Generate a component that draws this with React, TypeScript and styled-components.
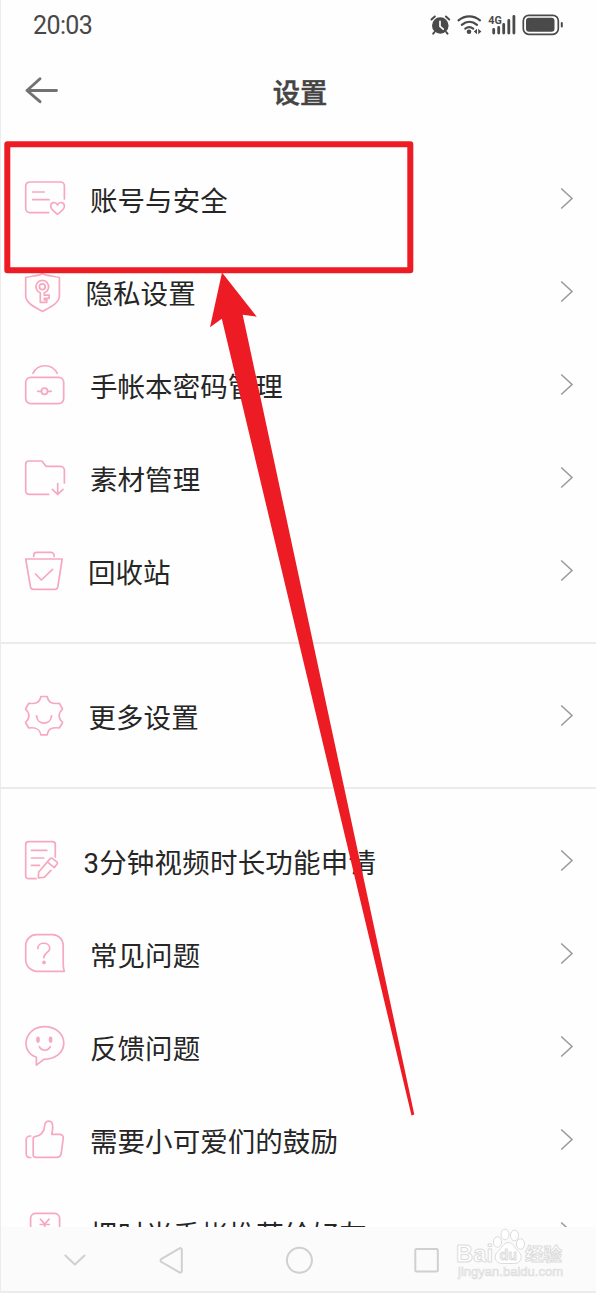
import React from "react";
import styled, { createGlobalStyle } from "styled-components";

const Global = createGlobalStyle`
  * { box-sizing: border-box; }
  body { margin: 0; background: #fefefe; overflow: hidden; }
`;

const Screen = styled.div`
  position: relative;
  display: flex;
  flex-direction: column;
  width: 596px;
  height: 1293px;
  overflow: hidden;
  background: #fefefe;
  border-left: 1px solid #ececec;
  border-bottom: 2px solid #ececec;
  font-family: Roboto, "Noto Sans CJK SC", sans-serif;
  color: #262626;
`;

const StatusBar = styled.div`
  display: flex;
  flex: none;
  justify-content: space-between;
  height: 50px;
  padding: 0 30px 0 32px;
`;

const Clock = styled.div`
  font: 400 25px/52px Roboto, sans-serif;
  letter-spacing: -0.6px;
  color: #484848;
`;

const StatusIcons = styled.svg`
  width: 140px;
  height: 50px;
`;

const SignalText = styled.text`
  font: 700 11.5px Roboto, sans-serif;
  fill: #4a4a4a;
`;

const Header = styled.header`
  display: grid;
  flex: none;
  grid-template-columns: 60px 1fr 60px;
  align-items: center;
  height: 82px;
  margin-bottom: 20px;
  padding: 0 0 0 3px;
`;

const BackIcon = styled.svg`
  width: 60px;
  height: 82px;
`;

const Title = styled.h1`
  margin: 0 0 1px;
  text-align: center;
  font: 500 27.3px/40px "Noto Sans CJK SC", sans-serif;
  color: #444;
  -webkit-text-stroke: 0.5px #444;
`;

const List = styled.main`
  flex: 1;
  min-height: 0;
  overflow: hidden;
`;

const Section = styled.section`
  padding-bottom: 25px;

  & + & {
    border-top: 2px solid #ebebeb;
    padding-top: 25px;
  }
`;

const Row = styled.div`
  display: flex;
  align-items: center;
  height: 93px;
  padding: 0 16px 0 19px;
`;

const RowIcon = styled.svg`
  flex: none;
  width: 50px;
  height: 61px;
  fill: none;
  stroke: #f6a8bf;
  stroke-width: 1.7;
  stroke-linecap: round;
  stroke-linejoin: round;
`;

const Label = styled.span<{ $gap: number; $spacing?: number }>`
  flex: 1;
  margin-left: ${(p) => p.$gap}px;
  padding-top: 6px;
  font-size: 27.5px;
  line-height: 40px;
  letter-spacing: ${(p) => p.$spacing ?? 0.05}px;
  white-space: nowrap;
`;

const Chevron = styled.svg`
  flex: none;
  width: 28px;
  height: 29px;
  fill: none;
  stroke: #9c9c9c;
  stroke-width: 1.6;
`;

const NavBar = styled.nav`
  position: relative;
  flex: none;
  height: 64px;
  background: #fbfbfb;
`;

const NavIcons = styled.svg`
  display: block;
  width: 595px;
  height: 64px;
  fill: none;
  stroke: #d0d0d0;
  stroke-width: 2;
  stroke-linecap: round;
  stroke-linejoin: round;
`;

const Watermark = styled.svg`
  position: absolute;
  left: 451px;
  top: -2px;
  width: 120px;
  height: 58px;
  fill: #fff;
  stroke: #dcdcdc;
  stroke-width: 1;
  stroke-linejoin: round;
`;

const MarkText = styled.text<{ $size: number; $weight?: number }>`
  font: ${(p) => p.$weight ?? 700} ${(p) => p.$size}px "Liberation Sans", "Noto Sans CJK SC", sans-serif;
  stroke-width: ${(p) => (p.$size < 15 ? 0.7 : 1)};
`;

const Annotation = styled.svg`
  position: absolute;
  left: -1px;
  top: 0;
  width: 596px;
  height: 1293px;
  pointer-events: none;
`;

const icons: Record<string, React.ReactNode> = {
  card: (
    <>
      <path d="M44.400 31V18a4 4 0 0 0-4-4H9.700a4 4 0 0 0-4 4v22.600a4 4 0 0 0 4 4h19M12.700 24h11.500M12.700 31.700h16.300" />
      <path d="M37.500 46.200C34.500 44 30.700 41.500 30.700 38.200c0-4.300 5-5 6.800-1.200 1.800-3.800 6.900-3.100 6.900 1.200 0 3.300-3.900 5.800-6.900 8Z" />
    </>
  ),
  shield: (
    <>
      <path d="M22.500 12.500C18 15.500 11 14.800 5.700 16.500V35c0 7 9 11 16.800 15.500C30.500 46 39.400 42 39.400 35V16.500C34 14.800 27 15.500 22.500 12.500Z" />
      <circle cx="22.300" cy="25.700" r="2.900" />
      <path d="M20.300 31.700a6.300 6.300 0 1 1 4 0v2.500h4.800v3.100h-4.800v1.500h2.500v2.500h-6.500Z" />
    </>
  ),
  lock: (
    <>
      <path d="M12.900 19.300C18 9.200 32 9.200 37.200 19.300" />
      <rect x="5.700" y="23.300" width="38" height="26.300" rx="5" />
      <circle cx="24.500" cy="37.300" r="3.100" />
      <path d="M17.700 37.300h3.700M27.600 37.300h3.700" />
    </>
  ),
  folder: (
    <path d="M28.700 47.400H9a3.300 3.300 0 0 1-3.300-3.300V17a3 3 0 0 1 3-3h13.200L26 19.300h14.500a4 4 0 0 1 3.900 4V36M37.700 36.700v10.800M32.300 42.300l5.400 5.200 5.300-5.200" />
  ),
  trash: (
    <path d="M13.700 16.500V15.500a3.200 3.200 0 0 1 3.200-3.200h14a3.200 3.200 0 0 1 3.200 3.200v1M5.700 19h36.500L37.800 47a3 3 0 0 1-2.800 2.300H13.500A3 3 0 0 1 10.500 47ZM15.500 34l5.900 6 11.200-10.700" />
  ),
  gear: (
    <>
      <path d="M20.900 11.500h6.300C28.500 18.500 33 19 39.300 18.300L42.600 24c-4.600 4.500-4.600 9 0 13.500L39.300 43C33 42.200 28.500 43 27.200 49.900h-6.300C19.500 43 15 42.200 8.800 43L5.500 37.500c4.600-4.500 4.600-9 0-13.500L8.800 18.300C15 19 19.500 18.500 20.900 11.500Z" />
      <path d="M16.500 30.800C17.500 40.500 30.500 40.500 31.600 30.800" />
    </>
  ),
  note: (
    <>
      <path d="M35.300 27V14.500a2.800 2.800 0 0 0-2.800-2.800h-24a2.800 2.800 0 0 0-2.800 2.800v31.400a2.800 2.800 0 0 0 2.800 2.800H16M11.500 20.400h15.300M11.500 28h12.200M11.500 35.400h8" />
      <path d="M31 40.300 24.500 47.200 18.300 48 18.700 42 30.200 28.600a1.500 1.500 0 0 1 2-.2l4.700 3.500a1.500 1.500 0 0 1 .2 2.100l-2.900 3.600-6.300-5.300" />
    </>
  ),
  question: (
    <>
      <path d="M44.300 48.300H17.200A11.500 11.500 0 0 1 5.700 36.800V22.500A10.800 10.800 0 0 1 16.500 11.700h16A10.800 10.800 0 0 1 43.200 22.500V41c0 3 .3 5 1.100 7.300Z" />
      <path d="M17.800 25.500c0-7 12-7 12 0 0 4-5.900 4-5.900 9.200" />
      <circle cx="24" cy="39.400" r="1" fill="#f6a8bf" />
    </>
  ),
  feedback: (
    <>
      <path d="M16.400 41.300C-1 35 4.500 10.700 24.700 10.700 35.500 10.700 43.800 18 43.800 27c0 10-9 16.200-20 16.300l-7.400 5.900Z" />
      <ellipse cx="18" cy="23.700" rx="1" ry="2.300" fill="#f6a8bf" />
      <ellipse cx="30.600" cy="23.700" rx="1" ry="2.300" fill="#f6a8bf" />
      <path d="M19.400 30.700c2 4.700 8.800 4.700 10.800 0" />
    </>
  ),
  thumb: (
    <path d="M10.700 27C7.500 27 6.200 28.200 6.200 31v14c0 2.500 1.500 3.700 4.500 3.500M13.200 30a2.500 2.500 0 0 1 2.500-2.600C20 27.200 24 23.500 24.500 18c.3-8 8.300-7.700 8.200 0 0 3-.5 5-.9 7.300h7.700c2.800 0 4 1.600 3.700 4.200L41.300 44c-.5 3-2 4.400-4.500 4.400H15.500a2.300 2.300 0 0 1-2.300-2.400Z" />
  ),
  yen: (
    <>
      <rect x="10.600" y="11.300" width="29" height="38" rx="5" />
      <path d="m20.500 17.200 4.200 4.900 4.300-4.900M20.300 22.500h8.900M20.300 26.500h8.900M24.700 22.500v8" />
    </>
  ),
};

type Item = { icon: string; label: string; gap: number; spacing?: number };

const sections: Item[][] = [
  [
    { icon: "card", label: "账号与安全", gap: 20 },
    { icon: "shield", label: "隐私设置", gap: 15.5 },
    { icon: "lock", label: "手帐本密码管理", gap: 20 },
    { icon: "folder", label: "素材管理", gap: 20 },
    { icon: "trash", label: "回收站", gap: 18 },
  ],
  [{ icon: "gear", label: "更多设置", gap: 18.5 }],
  [
    { icon: "note", label: "3分钟视频时长功能申请", gap: 13.5, spacing: 0.2 },
    { icon: "question", label: "常见问题", gap: 20 },
    { icon: "feedback", label: "反馈问题", gap: 20 },
    { icon: "thumb", label: "需要小可爱们的鼓励", gap: 20 },
    { icon: "yen", label: "把时光手帐推荐给好友", gap: 20, spacing: 0.2 },
  ],
];

export default function App() {
  return (
    <Screen>
      <Global />
      <StatusBar>
        <Clock>20:03</Clock>
        <StatusIcons viewBox="426 0 140 50" fill="none" stroke="#4a4a4a" strokeLinecap="round">
          <circle cx="440.300" cy="25.500" r="8.300" fill="#4a4a4a" stroke="none" />
          <path d="M431.500 19.500l3.300-3M449.200 19.500l-3.300-3M434.500 32l-1.300 1.700M446.200 32l1.300 1.700" strokeWidth="2" />
          <path d="M440 21.300v5l3.200 2.900" stroke="#fff" strokeWidth="1.700" />
          <path d="M458.500 20.300c6.500-5.300 15-5.300 21.500 0M461.800 24.800c4.700-4 10.500-4 15.200 0M465.300 28.700c2.700-2 5.200-2 7.900 0" strokeWidth="2.200" />
          <circle cx="469" cy="31.700" r="2.300" fill="#4a4a4a" stroke="none" />
          <path d="m477 28.800-3.200 2.700 3.200 2.700ZM478.200 28.800l3.200 2.700-3.200 2.700Z" fill="#4a4a4a" stroke="none" />
          <path d="M493.700 29.500v3.500M498.700 27.500V33M503.700 24.500V33M508.800 20.500V33M513.900 16.500V33" strokeWidth="2.800" />
          <SignalText x="488.300" y="24.200" stroke="none" textLength="13.500" lengthAdjust="spacingAndGlyphs">4G</SignalText>
          <rect x="523.300" y="15.300" width="35" height="19" rx="5.500" strokeWidth="1.700" />
          <rect x="526" y="17.800" width="28.500" height="14" rx="3" fill="#4a4a4a" stroke="none" />
          <path d="M561.800 23v3.500" strokeWidth="2" />
        </StatusIcons>
      </StatusBar>
      <Header>
        <BackIcon viewBox="4 50 60 82" fill="none" stroke="#727272" strokeWidth="2.900" strokeLinecap="round" strokeLinejoin="round">
          <path d="M56.500 90.500H27M40 78.700 27 90.500 40 101.700" />
        </BackIcon>
        <Title>设置</Title>
      </Header>
      <List>
        {sections.map((items, i) => (
          <Section key={i}>
            {items.map((item) => (
              <Row key={item.icon}>
                <RowIcon viewBox="0 0 50 61">{icons[item.icon]}</RowIcon>
                <Label $gap={item.gap} $spacing={item.spacing}>{item.label}</Label>
                <Chevron viewBox="0 0 28 29">
                  <path d="M9.200 4.500 20 14.500 9.200 24.500" />
                </Chevron>
              </Row>
            ))}
          </Section>
        ))}
      </List>
      <NavBar>
        <NavIcons viewBox="1 1227 595 64">
          <path d="m65.300 1255.500 9.600 9 9.600-9" />
          <path d="M161.500 1258.800 179.500 1248.300a1.500 1.500 0 0 1 2.300 1.300v21.500a1.500 1.500 0 0 1-2.300 1.300L161.500 1262a1.800 1.800 0 0 1 0-3.200Z" />
          <circle cx="299.400" cy="1260.300" r="12.500" />
          <rect x="415.300" y="1249" width="22.500" height="22.500" rx="1.200" />
        </NavIcons>
        <Watermark viewBox="452 1225 120 58">
          <MarkText $size={24.5} x="456" y="1262" textLength="37" lengthAdjust="spacingAndGlyphs">Bai</MarkText>
          <ellipse cx="497.500" cy="1242" rx="4" ry="5.300" />
          <ellipse cx="505" cy="1234.500" rx="4" ry="5.300" />
          <ellipse cx="514.500" cy="1235.500" rx="4" ry="5.300" />
          <ellipse cx="520.500" cy="1244" rx="4" ry="5.300" />
          <path d="M508.500 1242.500c5 0 6.500 6 10 9 5 4.500 2.500 12-4 12h-12c-8 0-9.500-8-4.500-12 4-3.500 5.500-9 10.500-9Z" />
          <MarkText $size={15.5} x="499.500" y="1260" fill="#f4f4f4" textLength="17.500" lengthAdjust="spacingAndGlyphs">du</MarkText>
          <MarkText $size={18.5} x="525" y="1261">经验</MarkText>
          <MarkText $size={12.5} $weight={400} x="458" y="1276" textLength="105" lengthAdjust="spacingAndGlyphs">jingyan.baidu.com</MarkText>
        </Watermark>
      </NavBar>
      <Annotation viewBox="0 0 596 1293">
        <path d="M7.300 144.300H410.300V270.300H7.300Z" fill="none" stroke="#ed1c24" strokeWidth="6" strokeLinejoin="round" />
        <path d="M222 272.500 256.800 316.700 242.700 314.700 414.300 1114.500 411.500 1115.500 221.800 318.700 210 327.200Z" fill="#ed1c24" />
      </Annotation>
    </Screen>
  );
}
